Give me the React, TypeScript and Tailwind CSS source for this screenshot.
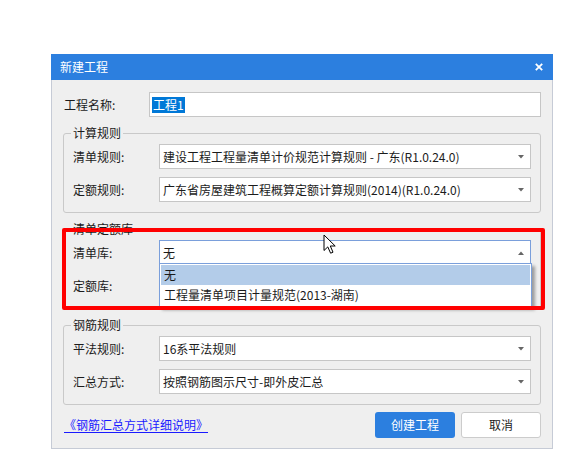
import clsx from "clsx";

function Caret({ up }: { up?: boolean }) {
  return (
    <svg width="6" height="4" viewBox="0 0 6 4" className="shrink-0">
      {up ? <path d="M0 4 L3 0.5 L6 4 Z" fill="#666" /> : <path d="M0 0 L6 0 L3 3.5 Z" fill="#666" />}
    </svg>
  );
}

function Dropdown() {
  return (
    <div className="absolute left-[-1px] right-[-2px] top-full z-10 -mt-[1px] border border-[#7a9fdb] bg-white p-[1px] shadow-[3px_3px_3px_rgba(0,0,0,0.35)]">
      <div className="flex h-[20px] items-center bg-[#b3cce9] pl-[3px]">无</div>
      <div className="flex h-[20px] items-center pl-[3px]">工程量清单项目计量规范(2013-湖南)</div>
    </div>
  );
}

function Select({ value, open }: { value: string; open?: boolean }) {
  return (
    <div
      className={clsx(
        "relative flex h-[25px] flex-1 items-center border bg-white pl-[3px] pr-[6px]",
        open ? "border-[#7a9fdb]" : "border-[#c6c6c6]"
      )}
    >
      <span className="flex-1 truncate">{value}</span>
      <Caret up={open} />
      {open && <Dropdown />}
    </div>
  );
}

function Row({ label, children }: { label: string; children: React.ReactNode }) {
  return (
    <div className="flex items-center">
      <span className="w-[86px] shrink-0">{label}</span>
      {children}
    </div>
  );
}

function Group({ title, children }: { title: string; children: React.ReactNode }) {
  return (
    <fieldset className="flex flex-col gap-[8px] rounded-[3px] border border-[#c9c9c9] px-[9px] pb-[10px] pt-[3px]">
      <legend className="-ml-[2px] px-[2px] leading-[16px]">{title}</legend>
      {children}
    </fieldset>
  );
}

function Cursor() {
  return (
    <svg width="14" height="21" viewBox="0 0 14 21" className="absolute left-[272px] top-[180px] z-30">
      <path
        d="M1 1 L1 16.5 L4.8 12.9 L7.6 19.2 L10 18.2 L7.3 12 L12.2 12 Z"
        fill="#fff"
        stroke="#000"
        strokeWidth="1"
        strokeLinejoin="round"
      />
    </svg>
  );
}

export default function App() {
  return (
    <div className="h-[452px] w-[573px] overflow-hidden bg-white pl-[51px] pt-[54px] font-['Noto_Sans_CJK_SC',sans-serif] text-[12px] leading-[16px] text-[#1b1b1b]">
      <div className="relative flex h-[395px] w-[502px] flex-col">
        <div className="flex h-[26px] items-center justify-between bg-[#2c7fdf] pl-[9px] pr-[10px] text-white">
          <span>新建工程</span>
          <svg width="8" height="8" viewBox="0 0 8 8">
            <path d="M0.8 0.8 L7.2 7.2 M7.2 0.8 L0.8 7.2" stroke="#fff" strokeWidth="1.8" />
          </svg>
        </div>

        <div className="flex flex-1 flex-col gap-[8px] border-x border-b border-[#c6cbd6] bg-[#efefef] px-[11px] pt-[12px]">
          <div className="flex items-center">
            <span className="w-[86px] shrink-0 pl-[1px]">工程名称:</span>
            <div className="flex h-[25px] flex-1 items-center border border-[#c6c6c6] bg-white pl-[2px]">
              <span className="bg-[#0078d7] px-[1px] text-white">工程1</span>
            </div>
          </div>

          <Group title="计算规则">
            <Row label="清单规则:">
              <Select value="建设工程工程量清单计价规范计算规则 - 广东(R1.0.24.0)" />
            </Row>
            <Row label="定额规则:">
              <Select value="广东省房屋建筑工程概算定额计算规则(2014)(R1.0.24.0)" />
            </Row>
          </Group>

          <Group title="清单定额库">
            <Row label="清单库:">
              <Select value="无" open />
            </Row>
            <Row label="定额库:">
              <Select value="" />
            </Row>
          </Group>

          <Group title="钢筋规则">
            <Row label="平法规则:">
              <Select value="16系平法规则" />
            </Row>
            <Row label="汇总方式:">
              <Select value="按照钢筋图示尺寸-即外皮汇总" />
            </Row>
          </Group>

          <div className="-mt-[1px] flex items-center">
            <a className="flex-1 pl-[1px] text-[#1a1aff] underline underline-offset-2">《钢筋汇总方式详细说明》</a>
            <div className="flex gap-[6px]">
              <button className="h-[26px] w-[80px] rounded-[3px] bg-[#2c7fdf] text-white">创建工程</button>
              <button className="h-[26px] w-[80px] rounded-[3px] border border-[#cccccc] bg-white">取消</button>
            </div>
          </div>
        </div>

        <div className="pointer-events-none absolute left-[11px] top-[174px] z-20 h-[82px] w-[483px] rounded-[2px] border-[4px] border-[#ff0000]" />
        <Cursor />
      </div>
    </div>
  );
}
